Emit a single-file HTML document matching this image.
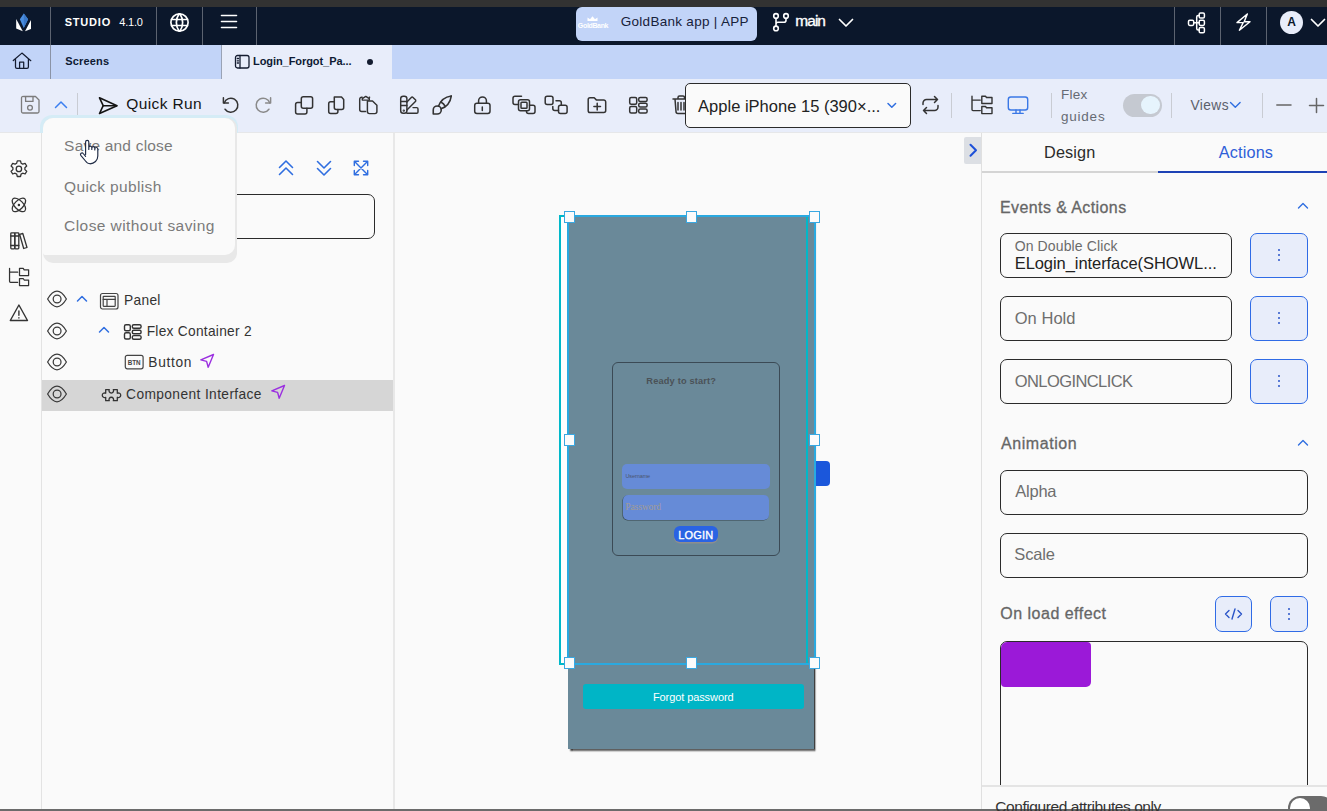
<!DOCTYPE html><html><head><meta charset="utf-8"><style>
html,body{margin:0;padding:0;width:1327px;height:811px;overflow:hidden;background:#fafafa;position:relative}
.a{position:absolute;display:block}
.t{position:absolute;white-space:pre;font-family:'Liberation Sans', sans-serif}
</style></head><body>
<div class="a" style="left:0px;top:0px;width:1327px;height:7px;background:#323232"></div>
<div class="a" style="left:0px;top:7px;width:1327px;height:38px;background:#0b172b"></div>
<div class="a" style="left:0px;top:45px;width:1327px;height:34px;background:#c2d4f8"></div>
<div class="a" style="left:0px;top:79px;width:1327px;height:53px;background:#e8edfa"></div>
<div class="a" style="left:0px;top:132px;width:1327px;height:1px;background:#e6e7e9"></div>
<div class="a" style="left:0px;top:133px;width:41px;height:676px;background:#fafafa"></div>
<div class="a" style="left:41px;top:133px;width:1px;height:676px;background:#e3e3e3"></div>
<div class="a" style="left:42px;top:133px;width:351px;height:676px;background:#fafafa"></div>
<div class="a" style="left:393px;top:133px;width:2px;height:676px;background:#e8e8e8"></div>
<div class="a" style="left:395px;top:133px;width:586px;height:676px;background:#fafafa"></div>
<div class="a" style="left:981px;top:133px;width:1px;height:676px;background:#e0e0e0"></div>
<div class="a" style="left:982px;top:133px;width:345px;height:676px;background:#fafafa"></div>
<div class="a" style="left:0px;top:809px;width:1327px;height:2px;background:#6b6b6b"></div>
<div class="a" style="left:50px;top:7px;width:1px;height:38px;background:#5c6370"></div>
<div class="a" style="left:156px;top:7px;width:1px;height:38px;background:#5c6370"></div>
<div class="a" style="left:202px;top:7px;width:1px;height:38px;background:#5c6370"></div>
<div class="a" style="left:256px;top:7px;width:1px;height:38px;background:#5c6370"></div>
<div class="a" style="left:1174px;top:7px;width:1px;height:38px;background:#5c6370"></div>
<div class="a" style="left:1220px;top:7px;width:1px;height:38px;background:#5c6370"></div>
<div class="a" style="left:1266px;top:7px;width:1px;height:38px;background:#5c6370"></div>
<div class="a" style="left:50px;top:45px;width:1px;height:34px;background:#8a93a6"></div>
<svg class="a" style="left:14px;top:12px" width="20" height="22" viewBox="0 0 20 22"><path d="M9.8 1.5 L14.1 7.3 L9.8 15.9 L5.8 7.3 Z" fill="#4a8ee0"/><path d="M9.8 1.5 L14.1 7.3 L9.8 15.9 Z" fill="#3a78c8"/><path d="M2.2 7 L8.8 19.2 L2.2 16.6 Z" fill="#ffffff"/><path d="M17 7.9 L17 16.9 L11 19.2 Z" fill="#ffffff"/></svg>
<svg class="a" style="left:169px;top:12px;" width="21" height="21" viewBox="0 0 21 21" fill="none" stroke="#ffffff" stroke-width="1.7" stroke-linecap="round" stroke-linejoin="round"><circle cx="10.5" cy="10.5" r="8.6"/><path d="M2.6 7.5h15.8M2.6 13.5h15.8M10 2a15 15 0 0 0 0 17M11 2a15 15 0 0 1 0 17"/></svg>
<svg class="a" style="left:219px;top:13px;" width="21" height="17" viewBox="0 0 21 17" fill="none" stroke="#ffffff" stroke-width="1.6" stroke-linecap="round" stroke-linejoin="round"><path d="M2.5 2.5h15M2.5 8.5h15M2.5 14.5h15"/></svg>
<div class="a" style="left:576px;top:7px;width:181px;height:33.5px;background:#c2d4f8;border-radius:6px"></div>
<svg class="a" style="left:577px;top:15px" width="34" height="15" viewBox="0 0 34 15"><path d="M10.5 6 L10.5 2.5 L13 4.2 L15.5 1.2 L18 4.2 L20.5 2.5 L20.5 6 Z" fill="#ffffff"/><text x="16" y="13" font-family="Liberation Sans" font-size="7" font-weight="700" fill="#ffffff" text-anchor="middle" letter-spacing="-0.35">GoldBank</text></svg>
<svg class="a" style="left:766px;top:8px;" width="30" height="28" viewBox="0 0 30 28" fill="none" stroke="#ffffff" stroke-width="1.6" stroke-linecap="round" stroke-linejoin="round"><circle cx="10" cy="7.9" r="2.3"/><circle cx="20" cy="7.9" r="2.3"/><circle cx="10" cy="20.4" r="2.3"/><path d="M10 10.2V18.1M20 10.2V12.2a2 2 0 0 1 -2 2H12a2 2 0 0 0 -2 2"/></svg>
<svg class="a" style="left:837px;top:17px;" width="18" height="12" viewBox="0 0 18 12" fill="none" stroke="#ffffff" stroke-width="1.7" stroke-linecap="round" stroke-linejoin="round"><path d="M2.5 2.5L9 9L15.5 2.5"/></svg>
<svg class="a" style="left:1184px;top:8px;" width="26" height="30" viewBox="0 0 26 30" fill="none" stroke="#ffffff" stroke-width="1.5" stroke-linecap="round" stroke-linejoin="round"><rect x="4.5" y="12.2" width="5.2" height="5.2" rx="1.3"/><rect x="15.2" y="4.9" width="5.2" height="5.2" rx="1.3"/><rect x="15.2" y="12.2" width="5.2" height="5.2" rx="1.3"/><rect x="15.2" y="19.5" width="5.2" height="5.2" rx="1.3"/><path d="M9.7 14.8H12.7M15.2 7.5h-1a1.5 1.5 0 0 0 -1.5 1.5V20.6a1.5 1.5 0 0 0 1.5 1.5h1M12.7 14.8h2.5"/></svg>
<svg class="a" style="left:1232px;top:10px;" width="22" height="24" viewBox="0 0 22 24" fill="none" stroke="#ffffff" stroke-width="1.45" stroke-linecap="round" stroke-linejoin="round"><path d="M15.3 4L5 12.6H11.2L7.4 20.2L18 11.8H12.2L15.3 4Z"/></svg>
<div class="a" style="left:1280px;top:10.8px;width:23px;height:23px;background:#e8edfa;border-radius:50%"></div>
<div class="t" style="left:1280px;top:16px;width:23px;text-align:center;font-size:12px;line-height:12px;font-weight:700;color:#0b172b">A</div>
<svg class="a" style="left:1309px;top:17px;" width="18" height="12" viewBox="0 0 18 12" fill="none" stroke="#ffffff" stroke-width="1.7" stroke-linecap="round" stroke-linejoin="round"><path d="M2.5 2.5L9 9L15.5 2.5"/></svg>
<svg class="a" style="left:8px;top:48px;" width="30" height="26" viewBox="0 0 30 26" fill="none" stroke="#141c30" stroke-width="1.25" stroke-linecap="round" stroke-linejoin="round"><path d="M5.3 12.5L13.9 5.1L22.8 12.7M7.5 11.3V19a1.4 1.4 0 0 0 1.4 1.4H19a1.4 1.4 0 0 0 1.4 -1.4V11.3M11.6 20.4V14.2H15.7V20.4"/></svg>
<div class="a" style="left:222px;top:45px;width:170px;height:34px;background:#e8edfa"></div>
<div class="a" style="left:221px;top:45px;width:1px;height:34px;background:#9aa3b5"></div>
<svg class="a" style="left:233px;top:53px;" width="18" height="17" viewBox="0 0 18 17" fill="none" stroke="#141c30" stroke-width="1.3" stroke-linecap="round" stroke-linejoin="round"><rect x="2.5" y="2.5" width="13.5" height="12.5" rx="2"/><path d="M7 2.5V15M4.3 5.5H5.5M4.3 7.8H5.5M4.3 10H5.5"/></svg>
<div class="a" style="left:367px;top:58.8px;width:6px;height:6px;background:#141c30;border-radius:50%"></div>
<svg class="a" style="left:19px;top:94px;" width="22" height="21" viewBox="0 0 22 21" fill="none" stroke="#7c7c7c" stroke-width="1.3" stroke-linecap="round" stroke-linejoin="round"><path d="M4.5 2.5H16.5L20 6V17.5a1.5 1.5 0 0 1 -1.5 1.5H4a1.5 1.5 0 0 1 -1.5 -1.5V4a1.5 1.5 0 0 1 2 -1.5Z"/><path d="M6.6 2.6V7.4H14V2.6"/><circle cx="11" cy="13.8" r="2.4"/></svg>
<svg class="a" style="left:53px;top:99px;" width="16" height="12" viewBox="0 0 16 12" fill="none" stroke="#3b7ff0" stroke-width="1.5" stroke-linecap="round" stroke-linejoin="round"><path d="M2.5 8.5L8 3L13.5 8.5"/></svg>
<div class="a" style="left:77px;top:93px;width:1px;height:25px;background:#c9ccd3"></div>
<svg class="a" style="left:96px;top:95px;" width="24" height="21" viewBox="0 0 24 21" fill="none" stroke="#141414" stroke-width="1.6" stroke-linecap="round" stroke-linejoin="round"><path d="M3.5 2.8L21 10.7L3.5 18.5L7.2 10.7Z"/><path d="M7.2 10.7H20.5"/></svg>
<svg class="a" style="left:220px;top:95px;" width="22" height="20" viewBox="0 0 22 20" fill="none" stroke="#333333" stroke-width="1.5" stroke-linecap="round" stroke-linejoin="round"><path d="M4.2 7.9A7 7 0 1 1 5.07 14.2"/><path d="M3.4 2.8V7.9H8.4"/></svg>
<svg class="a" style="left:252px;top:95px;" width="22" height="20" viewBox="0 0 22 20" fill="none" stroke="#8a8a8a" stroke-width="1.5" stroke-linecap="round" stroke-linejoin="round"><path d="M17.8 7.9A7 7 0 1 0 16.93 14.2"/><path d="M18.6 2.8V7.9H13.6"/></svg>
<svg class="a" style="left:292px;top:93px;" width="24" height="24" viewBox="0 0 24 24" fill="none" stroke="#333333" stroke-width="1.5" stroke-linecap="round" stroke-linejoin="round"><rect x="9.3" y="3.8" width="11.3" height="11.4" rx="2"/><path d="M9.3 9.5H5.6a2 2 0 0 0 -2 2V18.9a2 2 0 0 0 2 2H12.9a2 2 0 0 0 2 -2V15.2"/></svg>
<svg class="a" style="left:325px;top:93px;" width="22" height="24" viewBox="0 0 22 24" fill="none" stroke="#333333" stroke-width="1.5" stroke-linecap="round" stroke-linejoin="round"><path d="M9.3 4H16.5L18.7 6.4V14.5a2 2 0 0 1 -2 2H11.3a2 2 0 0 1 -2 -2Z"/><path d="M9.3 8.8H5.7a2 2 0 0 0 -2 2V18.4a2 2 0 0 0 2 2H10.9a2 2 0 0 0 2 -2V16.5"/></svg>
<svg class="a" style="left:356px;top:93px;" width="24" height="24" viewBox="0 0 24 24" fill="none" stroke="#333333" stroke-width="1.45" stroke-linecap="round" stroke-linejoin="round"><path d="M9.6 18.5H5.7a2 2 0 0 1 -2 -2V6.3a2 2 0 0 1 2 -2H6.2M13.3 4.3H13.6"/><path d="M6.3 7.1V5.6L9.8 3.4L13.3 5.6V7.1Z"/><path d="M11.4 8H16.5L20.9 12.3V18.6a2 2 0 0 1 -2 2H13.4a2 2 0 0 1 -2 -2Z"/></svg>
<svg class="a" style="left:398px;top:93px;" width="24" height="24" viewBox="0 0 24 24" fill="none" stroke="#333333" stroke-width="1.45" stroke-linecap="round" stroke-linejoin="round"><rect x="2.7" y="3.3" width="6.2" height="17" rx="2.5"/><path d="M2.7 8.5H8.9M2.7 12.4H8.9"/><circle cx="5.8" cy="17.6" r="0.45" fill="#333"/><path d="M8.9 8.9L13.3 4.4a1.2 1.2 0 0 1 1.7 0L17.4 6.8a1.2 1.2 0 0 1 0 1.7L8.9 17M8.9 20.3H18.7a1.3 1.3 0 0 0 1.3 -1.3V15.9a1.3 1.3 0 0 0 -1.3 -1.3H15"/></svg>
<svg class="a" style="left:431.5px;top:94.5px" width="20.5" height="20" viewBox="2 2 20 20" fill="none" stroke="#333333" stroke-width="1.6" stroke-linecap="round" stroke-linejoin="round"><path d="M3 21v-4a4 4 0 1 1 4 4h-4"/><path d="M21 3a16 16 0 0 0 -12.8 10.2"/><path d="M21 3a16 16 0 0 1 -10.2 12.8"/><path d="M10.6 9a9 9 0 0 1 4.4 4.4"/></svg>
<svg class="a" style="left:472px;top:93px;" width="21" height="24" viewBox="0 0 21 24" fill="none" stroke="#333333" stroke-width="1.5" stroke-linecap="round" stroke-linejoin="round"><rect x="2.7" y="10.3" width="15.3" height="10.2" rx="2.2"/><path d="M6.6 10.3V7.8a3.9 3.9 0 0 1 7.8 0V10.3M10.3 14v3.5"/></svg>
<svg class="a" style="left:510px;top:93px;" width="28" height="24" viewBox="0 0 28 24" fill="none" stroke="#333333" stroke-width="1.5" stroke-linecap="round" stroke-linejoin="round"><path d="M11.5 3.3H5a2 2 0 0 0 -2 2V9.5a2 2 0 0 0 2 2H8.5"/><rect x="8.5" y="6.8" width="11" height="11" rx="2"/><rect x="11" y="9.3" width="6" height="6" rx="0.8"/><path d="M19.5 12.3H23a2 2 0 0 1 2 2V18.5a2 2 0 0 1 -2 2H18.5a2 2 0 0 1 -2 -2V17.8"/></svg>
<svg class="a" style="left:542px;top:93px;" width="28" height="24" viewBox="0 0 28 24" fill="none" stroke="#333333" stroke-width="1.5" stroke-linecap="round" stroke-linejoin="round"><rect x="3.2" y="3.3" width="7.8" height="8.2" rx="2"/><path d="M14 7.8H17.3a2 2 0 0 1 2 2V12.3M10.8 13.5V15.5a2 2 0 0 0 2 2H16.5"/><rect x="16.5" y="12.3" width="8.6" height="8.2" rx="2"/></svg>
<svg class="a" style="left:586px;top:93px;" width="22" height="22" viewBox="0 0 22 22" fill="none" stroke="#333333" stroke-width="1.5" stroke-linecap="round" stroke-linejoin="round"><path d="M4 4.8H8.2L10.3 6.9H17.7a2 2 0 0 1 2 2V17.5a2 2 0 0 1 -2 2H4a1.8 1.8 0 0 1 -1.8 -1.8V6.6A1.8 1.8 0 0 1 4 4.8Z"/><path d="M11.2 10.3V16.9M7.9 13.6H14.5"/></svg>
<svg class="a" style="left:627px;top:94px;" width="23" height="22" viewBox="0 0 23 22" fill="none" stroke="#333333" stroke-width="1.5" stroke-linecap="round" stroke-linejoin="round"><rect x="2.7" y="3.4" width="7" height="6.8" rx="1.5"/><rect x="2.7" y="12.4" width="7" height="6.6" rx="1.5"/><rect x="11.7" y="3.4" width="8.4" height="4" rx="1.5"/><rect x="11.7" y="9.3" width="8.4" height="3.8" rx="1.5"/><rect x="11.7" y="15" width="8.4" height="4" rx="1.5"/></svg>
<svg class="a" style="left:670px;top:93px;" width="16" height="24" viewBox="0 0 16 24" fill="none" stroke="#333333" stroke-width="1.5" stroke-linecap="round" stroke-linejoin="round"><path d="M3 6H20M5 6L6 18.5a2 2 0 0 0 2 2H16M8 6V4.5a1.5 1.5 0 0 1 1.5 -1.5H13a1.5 1.5 0 0 1 1.5 1.5V6M8 9.5V17M11 9.5V17M14 9.5V17"/></svg>
<div class="a" style="left:685px;top:83px;width:223.5px;height:43px;background:#fafafa;border:1px solid #2b2b2b;border-radius:5px"></div>
<svg class="a" style="left:885px;top:99px;" width="14" height="12" viewBox="0 0 14 12" fill="none" stroke="#2f6ee0" stroke-width="1.5" stroke-linecap="round" stroke-linejoin="round"><path d="M3 4.5L6.8 8.3L10.6 4.5"/></svg>
<svg class="a" style="left:918px;top:93px;" width="25" height="24" viewBox="0 0 25 24" fill="none" stroke="#333333" stroke-width="1.5" stroke-linecap="round" stroke-linejoin="round"><path d="M5 11.5V10a3.5 3.5 0 0 1 3.5 -3.5H19.5M16.5 3.5L19.5 6.5L16.5 9.5M20 12.5V14a3.5 3.5 0 0 1 -3.5 3.5H5.5M8.5 20.5L5.5 17.5L8.5 14.5"/></svg>
<div class="a" style="left:951px;top:93px;width:1px;height:25px;background:#c9ccd3"></div>
<svg class="a" style="left:969px;top:93px;" width="25" height="24" viewBox="0 0 25 24" fill="none" stroke="#333333" stroke-width="1.4" stroke-linecap="round" stroke-linejoin="round"><path d="M3 3.3V16.6a1 1 0 0 0 1 1H11.3M3 7.1H11.3"/><path d="M12.8 10.5V3.3H16.5L17.5 4.5H23V10.5Z"/><path d="M12.8 20.6V13.5H16.5L17.5 14.7H23V20.6Z"/></svg>
<svg class="a" style="left:1005px;top:93px;" width="26" height="24" viewBox="0 0 26 24" fill="none" stroke="#3a78e6" stroke-width="1.4" stroke-linecap="round" stroke-linejoin="round"><rect x="3.3" y="4" width="19.4" height="13" rx="2.5"/><path d="M7.8 20.4H18.2M11 17V20.4M15 17V20.4"/></svg>
<div class="a" style="left:1051px;top:93px;width:1px;height:25px;background:#c9ccd3"></div>
<div class="a" style="left:1123px;top:93.8px;width:39px;height:23.2px;background:#c5c9d1;border-radius:12px"></div>
<div class="a" style="left:1140.8px;top:95.6px;width:18.8px;height:18.8px;background:#e6f4fd;border-radius:50%"></div>
<div class="a" style="left:1171px;top:93px;width:1px;height:25px;background:#c9ccd3"></div>
<svg class="a" style="left:1228px;top:99px;" width="15" height="12" viewBox="0 0 15 12" fill="none" stroke="#2f6ee0" stroke-width="1.4" stroke-linecap="round" stroke-linejoin="round"><path d="M2.5 3.5L7.3 8.3L12.1 3.5"/></svg>
<div class="a" style="left:1262px;top:93px;width:1px;height:25px;background:#c9ccd3"></div>
<svg class="a" style="left:1274px;top:98px;" width="20" height="14" viewBox="0 0 20 14" fill="none" stroke="#666666" stroke-width="1.5" stroke-linecap="round" stroke-linejoin="round"><path d="M2.8 7H17"/></svg>
<svg class="a" style="left:1307px;top:96px;" width="20" height="20" viewBox="0 0 20 20" fill="none" stroke="#666666" stroke-width="1.5" stroke-linecap="round" stroke-linejoin="round"><path d="M2.5 9.5H16.5M9.5 2.5V16.5"/></svg>
<svg class="a" style="left:8px;top:158px;" width="22" height="22" viewBox="0 0 22 22" fill="none" stroke="#333333" stroke-width="1.3" stroke-linecap="round" stroke-linejoin="round"><path d="M9.3 2.8h3.2l.6 2.4 1.6.9 2.4-.8 1.6 2.7-1.8 1.7v1.9l1.8 1.7-1.6 2.7-2.4-.8-1.6.9-.6 2.4H9.3l-.6-2.4-1.6-.9-2.4.8-1.6-2.7 1.8-1.7V9.7L3.1 8l1.6-2.7 2.4.8 1.6-.9Z"/><circle cx="10.9" cy="10.9" r="2.7"/></svg>
<svg class="a" style="left:8px;top:194px;" width="22" height="22" viewBox="0 0 22 22" fill="none" stroke="#333333" stroke-width="1.3" stroke-linecap="round" stroke-linejoin="round"><ellipse cx="10.9" cy="10.9" rx="8.5" ry="4.3" transform="rotate(45 10.9 10.9)"/><ellipse cx="10.9" cy="10.9" rx="8.5" ry="4.3" transform="rotate(-45 10.9 10.9)"/><circle cx="10.9" cy="10.9" r="0.6" fill="#333"/></svg>
<svg class="a" style="left:8px;top:230px;" width="22" height="22" viewBox="0 0 22 22" fill="none" stroke="#333333" stroke-width="1.3" stroke-linecap="round" stroke-linejoin="round"><rect x="2.8" y="2.8" width="4" height="16" rx="0.8"/><rect x="6.8" y="2.8" width="4" height="16" rx="0.8"/><path d="M2.8 6H10.8M2.8 15.5H10.8M11.6 4.3L14.8 3.5L19 17.5L15.7 18.5Z"/></svg>
<svg class="a" style="left:8px;top:266px;" width="22" height="22" viewBox="0 0 22 22" fill="none" stroke="#333333" stroke-width="1.25" stroke-linecap="round" stroke-linejoin="round"><path d="M1.55 2.3V15.3a1 1 0 0 0 1 1H9.7M1.55 6.2H9.7"/><path d="M11.5 9.5V2.3H15.2L16.2 3.8H20.6V9.5Z"/><path d="M11.5 19.5V12.5H15.2L16.2 14H20.6V19.5Z"/></svg>
<svg class="a" style="left:8px;top:302px;" width="22" height="22" viewBox="0 0 22 22" fill="none" stroke="#333333" stroke-width="1.4" stroke-linecap="round" stroke-linejoin="round"><path d="M10.9 3L19.5 18.5H2.3Z"/><path d="M10.9 9V13.2M10.9 15.8V16"/></svg>
<svg class="a" style="left:276px;top:158px;" width="20" height="20" viewBox="0 0 20 20" fill="none" stroke="#2f6ee0" stroke-width="1.6" stroke-linecap="round" stroke-linejoin="round"><path d="M3.5 9.5L10 3L16.5 9.5M3.5 16.5L10 10L16.5 16.5"/></svg>
<svg class="a" style="left:314px;top:158px;" width="20" height="20" viewBox="0 0 20 20" fill="none" stroke="#2f6ee0" stroke-width="1.6" stroke-linecap="round" stroke-linejoin="round"><path d="M3.5 3.5L10 10L16.5 3.5M3.5 10.5L10 17L16.5 10.5"/></svg>
<svg class="a" style="left:351px;top:158px;" width="20" height="20" viewBox="0 0 20 20" fill="none" stroke="#2f6ee0" stroke-width="1.4" stroke-linecap="round" stroke-linejoin="round"><path d="M3.3 3.3H7.5M3.3 3.3V7.5M16.7 3.3H12.5M16.7 3.3V7.5M3.3 16.7H7.5M3.3 16.7V12.5M16.7 16.7H12.5M16.7 16.7V12.5M3.3 3.3L16.7 16.7M16.7 3.3L3.3 16.7"/></svg>
<div class="a" style="left:180px;top:194px;width:195px;height:44.5px;border:1px solid #2b2b2b;border-radius:7px;box-sizing:border-box"></div>
<div class="a" style="left:42px;top:380px;width:351px;height:30.5px;background:#d6d6d6"></div>
<svg class="a" style="left:45px;top:289px;" width="24" height="20" viewBox="0 0 24 20" fill="none" stroke="#3a3a3a" stroke-width="1.25" stroke-linecap="round" stroke-linejoin="round"><path d="M2.6 10Q12 -5.6 21.4 10Q12 25.6 2.6 10Z"/><circle cx="12.1" cy="10" r="3.9"/></svg>
<svg class="a" style="left:45px;top:321px;" width="24" height="20" viewBox="0 0 24 20" fill="none" stroke="#3a3a3a" stroke-width="1.25" stroke-linecap="round" stroke-linejoin="round"><path d="M2.6 10Q12 -5.6 21.4 10Q12 25.6 2.6 10Z"/><circle cx="12.1" cy="10" r="3.9"/></svg>
<svg class="a" style="left:45px;top:352px;" width="24" height="20" viewBox="0 0 24 20" fill="none" stroke="#3a3a3a" stroke-width="1.25" stroke-linecap="round" stroke-linejoin="round"><path d="M2.6 10Q12 -5.6 21.4 10Q12 25.6 2.6 10Z"/><circle cx="12.1" cy="10" r="3.9"/></svg>
<svg class="a" style="left:45px;top:384px;" width="24" height="20" viewBox="0 0 24 20" fill="none" stroke="#3a3a3a" stroke-width="1.25" stroke-linecap="round" stroke-linejoin="round"><path d="M2.6 10Q12 -5.6 21.4 10Q12 25.6 2.6 10Z"/><circle cx="12.1" cy="10" r="3.9"/></svg>
<svg class="a" style="left:74px;top:293px;" width="16" height="12" viewBox="0 0 16 12" fill="none" stroke="#2f6ee0" stroke-width="1.5" stroke-linecap="round" stroke-linejoin="round"><path d="M3.5 8L8 3.5L12.5 8"/></svg>
<svg class="a" style="left:96px;top:324px;" width="16" height="12" viewBox="0 0 16 12" fill="none" stroke="#2f6ee0" stroke-width="1.5" stroke-linecap="round" stroke-linejoin="round"><path d="M3.5 8L8 3.5L12.5 8"/></svg>
<svg class="a" style="left:98px;top:291px;" width="22" height="20" viewBox="0 0 22 20" fill="none" stroke="#444444" stroke-width="1.2" stroke-linecap="round" stroke-linejoin="round"><rect x="2.5" y="2.5" width="17.5" height="15.5" rx="2"/><rect x="5.2" y="5.3" width="12" height="10" rx="0.5"/><path d="M5.2 8.4H17.2M9 8.4V15.3"/></svg>
<svg class="a" style="left:122px;top:322px;" width="22" height="20" viewBox="0 0 22 20" fill="none" stroke="#333333" stroke-width="1.4" stroke-linecap="round" stroke-linejoin="round"><rect x="2.5" y="2.7" width="5.8" height="6" rx="1.5"/><rect x="2.5" y="10.8" width="5.8" height="6.2" rx="1.5"/><rect x="10.3" y="2.7" width="8.8" height="3.6" rx="1.5"/><rect x="10.3" y="8.2" width="8.8" height="3.6" rx="1.5"/><rect x="10.3" y="13.6" width="8.8" height="3.6" rx="1.5"/></svg>
<svg class="a" style="left:123px;top:353px;" width="22" height="18" viewBox="0 0 22 18" fill="none" stroke="#444444" stroke-width="1.2" stroke-linecap="round" stroke-linejoin="round"><rect x="2.3" y="2.3" width="17.8" height="13.5" rx="2"/><text x="11.2" y="12" font-family="Liberation Sans" font-size="6.3" font-weight="700" fill="#444" stroke="none" text-anchor="middle">BTN</text></svg>
<svg class="a" style="left:100px;top:386px;" width="24" height="18" viewBox="0 0 24 18" fill="none" stroke="#333333" stroke-width="1.3" stroke-linecap="round" stroke-linejoin="round"><path d="M5.7 3.6H9.3a2.3 2.3 0 1 0 4 0H17.3V7.3a2.3 2.3 0 1 1 0 4V14.7H13.3a2.3 2.3 0 1 0 -4 0H5.7V11.3a2.3 2.3 0 1 1 0 -4Z"/></svg>
<svg class="a" style="left:198px;top:352px;" width="18" height="18" viewBox="0 0 18 18" fill="none" stroke="#9b2fe0" stroke-width="1.4" stroke-linecap="round" stroke-linejoin="round"><path d="M15.5 2.5L2.8 7.8L8.6 9.4L10.2 15.2Z"/></svg>
<svg class="a" style="left:269px;top:383px;" width="18" height="18" viewBox="0 0 18 18" fill="none" stroke="#9b2fe0" stroke-width="1.4" stroke-linecap="round" stroke-linejoin="round"><path d="M15.5 2.5L2.8 7.8L8.6 9.4L10.2 15.2Z"/></svg>
<div class="a" style="left:568px;top:217px;width:245.5px;height:531.5px;background:#6a8999;box-shadow:1.5px 2px 1.5px rgba(0,0,0,0.75)"></div>
<div class="a" style="left:561px;top:217px;width:6px;height:446px;background:#fefefe"></div>
<div class="a" style="left:559px;top:215px;width:249px;height:450px;border:2px solid #00b8c9;box-sizing:border-box"></div>
<div class="a" style="left:567px;top:215px;width:249px;height:450px;border:2px solid #2aa9e0;box-sizing:border-box"></div>
<div class="a" style="left:611.5px;top:362px;width:168.5px;height:193.5px;border:1px solid #3b4a55;border-radius:6px;box-sizing:border-box"></div>
<div class="a" style="left:622px;top:464px;width:147.5px;height:24.8px;background:#668bd7;border-radius:5px"></div>
<div class="a" style="left:622.5px;top:495px;width:146.5px;height:24.6px;background:#668bd7;border-radius:5px;box-shadow:-0.5px 0.5px 0.5px rgba(0,0,0,0.5)"></div>
<div class="t" style="left:625.5px;top:473.5px;font-size:5.5px;line-height:5.5px;color:#4a5670;letter-spacing:-0.1px">Username</div>
<div class="a" style="left:674px;top:526.2px;width:43.7px;height:16px;background:#2a63e3;border-radius:6px;box-shadow:0 1.5px 0 #8e8e8e"></div>
<div class="a" style="left:583px;top:684px;width:220.5px;height:24.7px;background:#00b5c6;border-radius:3px"></div>
<div class="a" style="left:816px;top:461px;width:14px;height:24.5px;background:#1b57db;border-radius:0 4px 4px 0"></div>
<div class="a" style="left:564.0px;top:211px;width:11px;height:12px;background:#fbfbfb;border:1.5px solid #3aa8e2;box-sizing:border-box"></div>
<div class="a" style="left:564.0px;top:434px;width:11px;height:12px;background:#fbfbfb;border:1.5px solid #3aa8e2;box-sizing:border-box"></div>
<div class="a" style="left:564.0px;top:657px;width:11px;height:12px;background:#fbfbfb;border:1.5px solid #3aa8e2;box-sizing:border-box"></div>
<div class="a" style="left:686.0px;top:211px;width:11px;height:12px;background:#fbfbfb;border:1.5px solid #3aa8e2;box-sizing:border-box"></div>
<div class="a" style="left:686.0px;top:657px;width:11px;height:12px;background:#fbfbfb;border:1.5px solid #3aa8e2;box-sizing:border-box"></div>
<div class="a" style="left:808.5px;top:211px;width:11px;height:12px;background:#fbfbfb;border:1.5px solid #3aa8e2;box-sizing:border-box"></div>
<div class="a" style="left:808.5px;top:434px;width:11px;height:12px;background:#fbfbfb;border:1.5px solid #3aa8e2;box-sizing:border-box"></div>
<div class="a" style="left:808.5px;top:657px;width:11px;height:12px;background:#fbfbfb;border:1.5px solid #3aa8e2;box-sizing:border-box"></div>
<div class="a" style="left:964px;top:137px;width:17px;height:26.5px;background:#dcdfe4;border-radius:2px 0 0 2px"></div>
<svg class="a" style="left:964px;top:138px;" width="17" height="25" viewBox="0 0 17 25" fill="none" stroke="#1d50d8" stroke-width="2" stroke-linecap="round" stroke-linejoin="round"><path d="M6.5 6.8L12 12.3L6.5 17.8"/></svg>
<div class="a" style="left:982px;top:171.3px;width:176px;height:1.5px;background:#d4d4d4"></div>
<div class="a" style="left:1158px;top:171px;width:169px;height:2.2px;background:#1d42b5"></div>
<svg class="a" style="left:1296px;top:201px;" width="14" height="10" viewBox="0 0 14 10" fill="none" stroke="#2f6ee0" stroke-width="1.4" stroke-linecap="round" stroke-linejoin="round"><path d="M2.5 7L7 2.5L11.5 7"/></svg>
<svg class="a" style="left:1296px;top:438px;" width="14" height="10" viewBox="0 0 14 10" fill="none" stroke="#2f6ee0" stroke-width="1.4" stroke-linecap="round" stroke-linejoin="round"><path d="M2.5 7L7 2.5L11.5 7"/></svg>
<div class="a" style="left:1000px;top:233px;width:232px;height:44.5px;border:1px solid #2b2b2b;border-radius:7px;box-sizing:border-box"></div>
<div class="a" style="left:1250px;top:233px;width:57.5px;height:44.5px;background:#e8edfa;border:1.2px solid #2f6be6;border-radius:7px;box-sizing:border-box"></div><div class="a" style="left:1277.75px;top:249.25px;width:2px;height:2px;background:#2b55c8;border-radius:50%"></div><div class="a" style="left:1277.75px;top:254.25px;width:2px;height:2px;background:#2b55c8;border-radius:50%"></div><div class="a" style="left:1277.75px;top:259.25px;width:2px;height:2px;background:#2b55c8;border-radius:50%"></div>
<div class="a" style="left:1000px;top:296px;width:232px;height:44.5px;border:1px solid #2b2b2b;border-radius:7px;box-sizing:border-box"></div>
<div class="a" style="left:1250px;top:296px;width:57.5px;height:44.5px;background:#e8edfa;border:1.2px solid #2f6be6;border-radius:7px;box-sizing:border-box"></div><div class="a" style="left:1277.75px;top:312.25px;width:2px;height:2px;background:#2b55c8;border-radius:50%"></div><div class="a" style="left:1277.75px;top:317.25px;width:2px;height:2px;background:#2b55c8;border-radius:50%"></div><div class="a" style="left:1277.75px;top:322.25px;width:2px;height:2px;background:#2b55c8;border-radius:50%"></div>
<div class="a" style="left:1000px;top:359px;width:232px;height:44.5px;border:1px solid #2b2b2b;border-radius:7px;box-sizing:border-box"></div>
<div class="a" style="left:1250px;top:359px;width:57.5px;height:44.5px;background:#e8edfa;border:1.2px solid #2f6be6;border-radius:7px;box-sizing:border-box"></div><div class="a" style="left:1277.75px;top:375.25px;width:2px;height:2px;background:#2b55c8;border-radius:50%"></div><div class="a" style="left:1277.75px;top:380.25px;width:2px;height:2px;background:#2b55c8;border-radius:50%"></div><div class="a" style="left:1277.75px;top:385.25px;width:2px;height:2px;background:#2b55c8;border-radius:50%"></div>
<div class="a" style="left:1000px;top:470.4px;width:308px;height:44.3px;border:1px solid #2b2b2b;border-radius:7px;box-sizing:border-box"></div>
<div class="a" style="left:1000px;top:533.4px;width:308px;height:44.3px;border:1px solid #2b2b2b;border-radius:7px;box-sizing:border-box"></div>
<div class="a" style="left:1215.4px;top:596px;width:36.4px;height:36px;background:#e8edfa;border:1.2px solid #2f6be6;border-radius:7px;box-sizing:border-box"></div>
<svg class="a" style="left:1221px;top:602px;" width="25" height="24" viewBox="0 0 25 24" fill="none" stroke="#2b55c8" stroke-width="1.4" stroke-linecap="round" stroke-linejoin="round"><path d="M8 8.5L4.5 12L8 15.5M17 8.5L20.5 12L17 15.5M14 7L11 17"/></svg>
<div class="a" style="left:1270px;top:596px;width:37.5px;height:36px;background:#e8edfa;border:1.2px solid #2f6be6;border-radius:7px;box-sizing:border-box"></div><div class="a" style="left:1287.75px;top:608.0px;width:2px;height:2px;background:#2b55c8;border-radius:50%"></div><div class="a" style="left:1287.75px;top:613.0px;width:2px;height:2px;background:#2b55c8;border-radius:50%"></div><div class="a" style="left:1287.75px;top:618.0px;width:2px;height:2px;background:#2b55c8;border-radius:50%"></div>
<div class="a" style="left:1000px;top:641.4px;width:308px;height:170px;border:1px solid #2b2b2b;border-radius:7px;box-sizing:border-box"></div>
<div class="a" style="left:1001px;top:642px;width:90px;height:45px;background:#9b19d8;border-radius:6px 4px 5px 4px"></div>
<div class="a" style="left:982px;top:785px;width:345px;height:26px;background:#fafafa"></div>
<div class="a" style="left:982px;top:785px;width:345px;height:1.5px;background:#e4e4e4"></div>
<div class="a" style="left:1288px;top:796px;width:45px;height:24px;background:#6b6b6b;border-radius:12px"></div>
<div class="a" style="left:1290px;top:798px;width:20px;height:20px;background:#ffffff;border-radius:50%"></div>
<div class="a" style="left:0px;top:809px;width:1327px;height:2px;background:#6b6b6b"></div>
<div class="t" style="left:64.7px;top:17.1px;font-size:11.0px;line-height:11.0px;font-weight:700;letter-spacing:0.8px;color:#ffffff;">STUDIO</div>
<div class="t" style="left:119.3px;top:17.1px;font-size:11.0px;line-height:11.0px;font-weight:400;letter-spacing:-0.2px;color:#ffffff;">4.1.0</div>
<div class="t" style="left:620.7px;top:15.3px;font-size:13.5px;line-height:13.5px;font-weight:400;letter-spacing:0.294px;color:#17213a;">GoldBank app | APP</div>
<div class="t" style="left:795.3px;top:13.3px;font-size:15.5px;line-height:15.5px;font-weight:400;letter-spacing:-0.967px;color:#ffffff;-webkit-text-stroke:0.35px #ffffff;">main</div>
<div class="t" style="left:65.3px;top:56.1px;font-size:11.0px;line-height:11.0px;font-weight:700;letter-spacing:0.167px;color:#0e1a33;">Screens</div>
<div class="t" style="left:253.0px;top:56.1px;font-size:11.0px;line-height:11.0px;font-weight:700;letter-spacing:-0.065px;color:#0e1a33;">Login_Forgot_Pa...</div>
<div class="t" style="left:126.3px;top:96.0px;font-size:15.5px;line-height:15.5px;font-weight:400;letter-spacing:0.375px;color:#141414;">Quick Run</div>
<div class="t" style="left:698.1px;top:98.3px;font-size:16.5px;line-height:16.5px;font-weight:400;letter-spacing:0.009px;color:#222222;">Apple iPhone 15 (390×...</div>
<div class="t" style="left:1060.9px;top:88.4px;font-size:13.5px;line-height:13.5px;font-weight:400;letter-spacing:0.267px;color:#666a73;">Flex</div>
<div class="t" style="left:1060.9px;top:109.8px;font-size:13.5px;line-height:13.5px;font-weight:400;letter-spacing:0.8px;color:#666a73;">guides</div>
<div class="t" style="left:1190.5px;top:99.0px;font-size:13.75px;line-height:13.75px;font-weight:400;letter-spacing:0.4px;color:#5b606b;">Views</div>
<div class="t" style="left:124.1px;top:294.3px;font-size:13.75px;line-height:13.75px;font-weight:400;letter-spacing:0.275px;color:#333333;">Panel</div>
<div class="t" style="left:146.7px;top:325.3px;font-size:13.75px;line-height:13.75px;font-weight:400;letter-spacing:0.267px;color:#333333;">Flex Container 2</div>
<div class="t" style="left:148.3px;top:356.3px;font-size:13.75px;line-height:13.75px;font-weight:400;letter-spacing:0.68px;color:#333333;">Button</div>
<div class="t" style="left:126.1px;top:387.8px;font-size:13.75px;line-height:13.75px;font-weight:400;letter-spacing:0.389px;color:#333333;">Component Interface</div>
<div class="t" style="left:646.3px;top:377.2px;font-size:9.25px;line-height:9.25px;font-weight:700;letter-spacing:0.171px;color:#4b5257;">Ready to start?</div>
<div class="t" style="left:625.3px;top:503.3px;font-size:9.5px;line-height:9.5px;font-weight:400;letter-spacing:-0.086px;color:#a39b93;font-family:'Liberation Serif', serif;">Password</div>
<div class="t" style="left:678.3px;top:530.3px;font-size:11.0px;line-height:11.0px;font-weight:400;letter-spacing:0.15px;color:#ffffff;-webkit-text-stroke:0.35px #ffffff;">LOGIN</div>
<div class="t" style="left:652.9px;top:691.7px;font-size:11.0px;line-height:11.0px;font-weight:400;letter-spacing:-0.086px;color:#ffffff;">Forgot password</div>
<div class="t" style="left:1044.0px;top:143.7px;font-size:16.25px;line-height:16.25px;font-weight:400;letter-spacing:0.14px;color:#2b2b2b;">Design</div>
<div class="t" style="left:1218.8px;top:143.7px;font-size:16.25px;line-height:16.25px;font-weight:400;letter-spacing:0.15px;color:#2f5fd8;">Actions</div>
<div class="t" style="left:1000.0px;top:200.0px;font-size:16.0px;line-height:16.0px;font-weight:400;letter-spacing:0.407px;color:#666666;-webkit-text-stroke:0.3px #666666;">Events & Actions</div>
<div class="t" style="left:1014.7px;top:239.1px;font-size:14.0px;line-height:14.0px;font-weight:400;letter-spacing:0.121px;color:#6b6b6b;">On Double Click</div>
<div class="t" style="left:1014.7px;top:255.3px;font-size:16.5px;line-height:16.5px;font-weight:400;letter-spacing:-0.062px;color:#222222;">ELogin_interface(SHOWL...</div>
<div class="t" style="left:1014.7px;top:309.9px;font-size:16.5px;line-height:16.5px;font-weight:400;letter-spacing:0.05px;color:#6e6e6e;">On Hold</div>
<div class="t" style="left:1014.7px;top:372.9px;font-size:16.5px;line-height:16.5px;font-weight:400;letter-spacing:-0.573px;color:#6e6e6e;">ONLOGINCLICK</div>
<div class="t" style="left:1001.0px;top:436.1px;font-size:16.0px;line-height:16.0px;font-weight:400;letter-spacing:0.562px;color:#666666;-webkit-text-stroke:0.3px #666666;">Animation</div>
<div class="t" style="left:1015.3px;top:483.3px;font-size:16.5px;line-height:16.5px;font-weight:400;letter-spacing:-0.25px;color:#6e6e6e;">Alpha</div>
<div class="t" style="left:1014.3px;top:546.3px;font-size:16.5px;line-height:16.5px;font-weight:400;letter-spacing:-0.15px;color:#6e6e6e;">Scale</div>
<div class="t" style="left:1000.3px;top:606.3px;font-size:16.0px;line-height:16.0px;font-weight:400;letter-spacing:0.492px;color:#666666;-webkit-text-stroke:0.3px #666666;">On load effect</div>
<div class="t" style="left:995.3px;top:798.6px;font-size:15.5px;line-height:15.5px;font-weight:400;letter-spacing:-0.424px;color:#333333;">Configured attributes only</div>
<div class="a" style="left:40px;top:115px;width:198px;height:18px;background:#d5ecf6;border-radius:12px 12px 0 0"></div>
<div class="a" style="left:43px;top:118px;width:194px;height:145px;background:#e8e8e8;border-radius:10px"></div>
<div class="a" style="left:43px;top:118px;width:192px;height:137px;background:#fafafa;border-radius:10px 10px 10px 2px"></div>
<div class="t" style="left:64.1px;top:138.3px;font-size:15.5px;line-height:15.5px;font-weight:400;letter-spacing:0.2px;color:#7b7b7b;">Save and close</div>
<div class="t" style="left:64.1px;top:178.6px;font-size:15.5px;line-height:15.5px;font-weight:400;letter-spacing:0.35px;color:#7b7b7b;">Quick publish</div>
<div class="t" style="left:64.1px;top:217.5px;font-size:15.5px;line-height:15.5px;font-weight:400;letter-spacing:0.426px;color:#7b7b7b;">Close without saving</div>
<svg class="a" style="left:79px;top:138px;" width="22" height="28" viewBox="0 0 22 28" fill="#ffffff" stroke="#1e2a44" stroke-width="1.15" stroke-linecap="round" stroke-linejoin="round"><path d="M6.6 16.5V4a1.6 1.6 0 0 1 3.2 0V11.5V9.6a1.5 1.5 0 0 1 3 0V11.5V10.1a1.5 1.5 0 0 1 3 0V12V11a1.5 1.5 0 0 1 3 0V18a7.8 7.8 0 0 1 -7.8 7.8H11.5a6 6 0 0 1 -5 -2.8L1.8 17.3a1.5 1.5 0 0 1 2.4 -1.8L6.6 18.3"/></svg>
</body></html>
